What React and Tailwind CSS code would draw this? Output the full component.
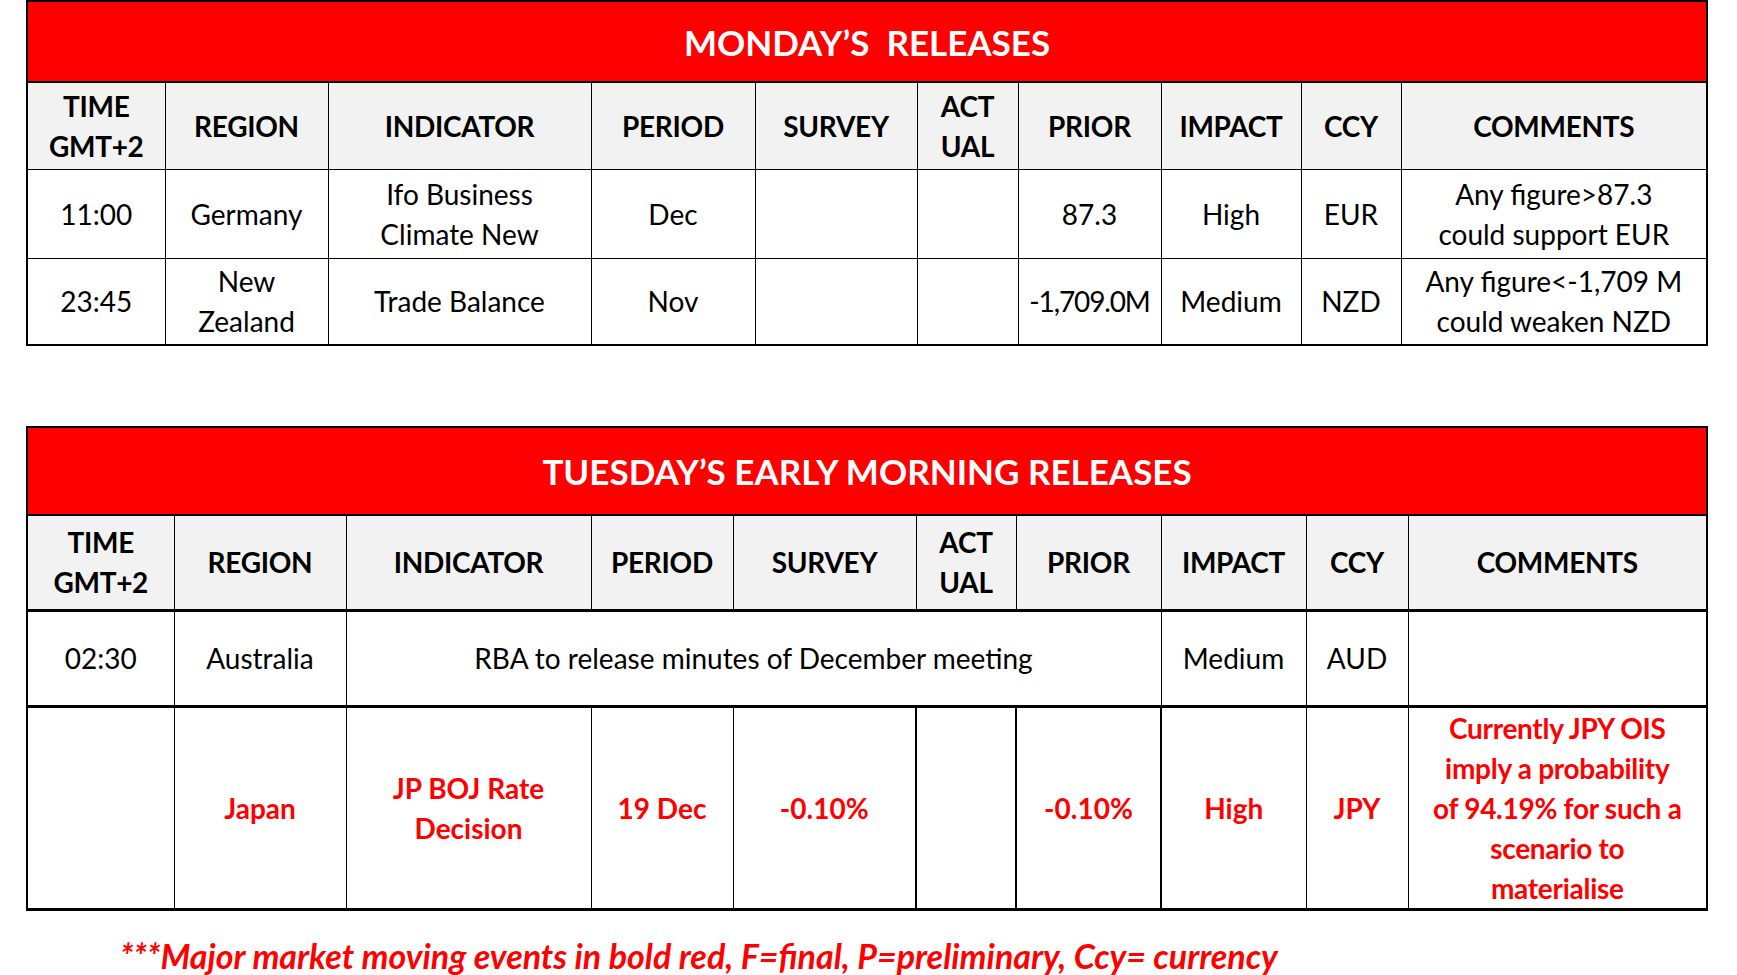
import React from "react";

const monCols = [138, 163, 263, 164, 162, 101, 143, 140, 100, 306];
const tueCols = [147, 172, 245, 142, 183, 100, 145, 145, 102, 299];

const headers = [
  <>TIME<br />GMT+2</>,
  "REGION",
  "INDICATOR",
  "PERIOD",
  "SURVEY",
  <>ACT<br />UAL</>,
  "PRIOR",
  "IMPACT",
  "CCY",
  "COMMENTS",
];

function Cols({ widths }) {
  return (
    <colgroup>
      {widths.map((w, i) => (
        <col key={i} style={{ width: w }} />
      ))}
    </colgroup>
  );
}

const td = "border border-black text-center align-middle px-0";

export default function App() {
  return (
    <div className="w-[1737px] h-[975px] bg-white font-[Lato,sans-serif] text-black text-[28px] leading-[40px] pl-[26px] overflow-hidden">
      {/* Monday */}
      <table className="table-fixed border-collapse w-[1680px] border-2 border-black">
        <Cols widths={monCols} />
        <tbody>
          <tr>
            <td colSpan={10} className="h-[81px] bg-[#ff0000] text-white font-bold text-[35px] text-center align-middle border-2 border-black whitespace-pre">
              {"MONDAY’S  RELEASES"}
            </td>
          </tr>
          <tr className="bg-[#f2f2f2] font-bold">
            {headers.map((h, i) => (
              <td key={i} className={`${td} h-[87px] tracking-[-0.01em]`}>{h}</td>
            ))}
          </tr>
          <tr>
            <td className={`${td} h-[89px]`}>11:00</td>
            <td className={td}>Germany</td>
            <td className={td}>Ifo Business<br />Climate New</td>
            <td className={td}>Dec</td>
            <td className={td}></td>
            <td className={td}></td>
            <td className={td}>87.3</td>
            <td className={td}>High</td>
            <td className={td}>EUR</td>
            <td className={td}>Any figure&gt;87.3<br />could support EUR</td>
          </tr>
          <tr>
            <td className={`${td} h-[87px]`}>23:45</td>
            <td className={td}>New<br />Zealand</td>
            <td className={td}>Trade Balance</td>
            <td className={td}>Nov</td>
            <td className={td}></td>
            <td className={td}></td>
            <td className={`${td} whitespace-nowrap tracking-[-0.04em]`}>-1,709.0M</td>
            <td className={td}>Medium</td>
            <td className={td}>NZD</td>
            <td className={`${td} whitespace-nowrap`}>Any figure&lt;-1,709 M<br />could weaken NZD</td>
          </tr>
        </tbody>
      </table>

      {/* Tuesday */}
      <table className="table-fixed border-collapse w-[1680px] border-2 border-black mt-[80px]">
        <Cols widths={tueCols} />
        <tbody>
          <tr>
            <td colSpan={10} className="h-[88px] bg-[#ff0000] text-white font-bold text-[35px] text-center align-middle border-2 border-black">
              TUESDAY’S EARLY MORNING RELEASES
            </td>
          </tr>
          <tr className="bg-[#f2f2f2] font-bold">
            {headers.map((h, i) => (
              <td key={i} className={`${td} h-[95px] border-b-[3px] tracking-[-0.01em]`}>{h}</td>
            ))}
          </tr>
          <tr>
            <td className={`${td} h-[96px] border-b-[3px]`}>02:30</td>
            <td className={`${td} border-b-[3px]`}>Australia</td>
            <td colSpan={5} className={`${td} border-b-[3px]`}>RBA to release minutes of December meeting</td>
            <td className={`${td} border-b-[3px]`}>Medium</td>
            <td className={`${td} border-b-[3px]`}>AUD</td>
            <td className={`${td} border-b-[3px]`}></td>
          </tr>
          <tr className="text-[#ff0000] font-bold">
            <td className={`${td} h-[202px] border-b-[3px]`}></td>
            <td className={`${td} border-b-[3px]`}>Japan</td>
            <td className={`${td} border-b-[3px]`}>JP BOJ Rate<br />Decision</td>
            <td className={`${td} border-b-[3px]`}>19 Dec</td>
            <td className={`${td} border-b-[3px] border-r-2`}>-0.10%</td>
            <td className={`${td} border-b-[3px] border-r-2`}></td>
            <td className={`${td} border-b-[3px] border-r-2`}>-0.10%</td>
            <td className={`${td} border-b-[3px]`}>High</td>
            <td className={`${td} border-b-[3px]`}>JPY</td>
            <td className={`${td} border-b-[3px] tracking-[-0.01em]`}>
              Currently JPY OIS<br />imply a probability<br />of 94.19% for such a<br />scenario to<br />materialise
            </td>
          </tr>
        </tbody>
      </table>

      <div className="mt-[25px] pl-[94px] text-[#ff0000] font-bold italic text-[34px] leading-[40px] whitespace-nowrap">
        ***Major market moving events in bold red, F=final, P=preliminary, Ccy= currency
      </div>
    </div>
  );
}
